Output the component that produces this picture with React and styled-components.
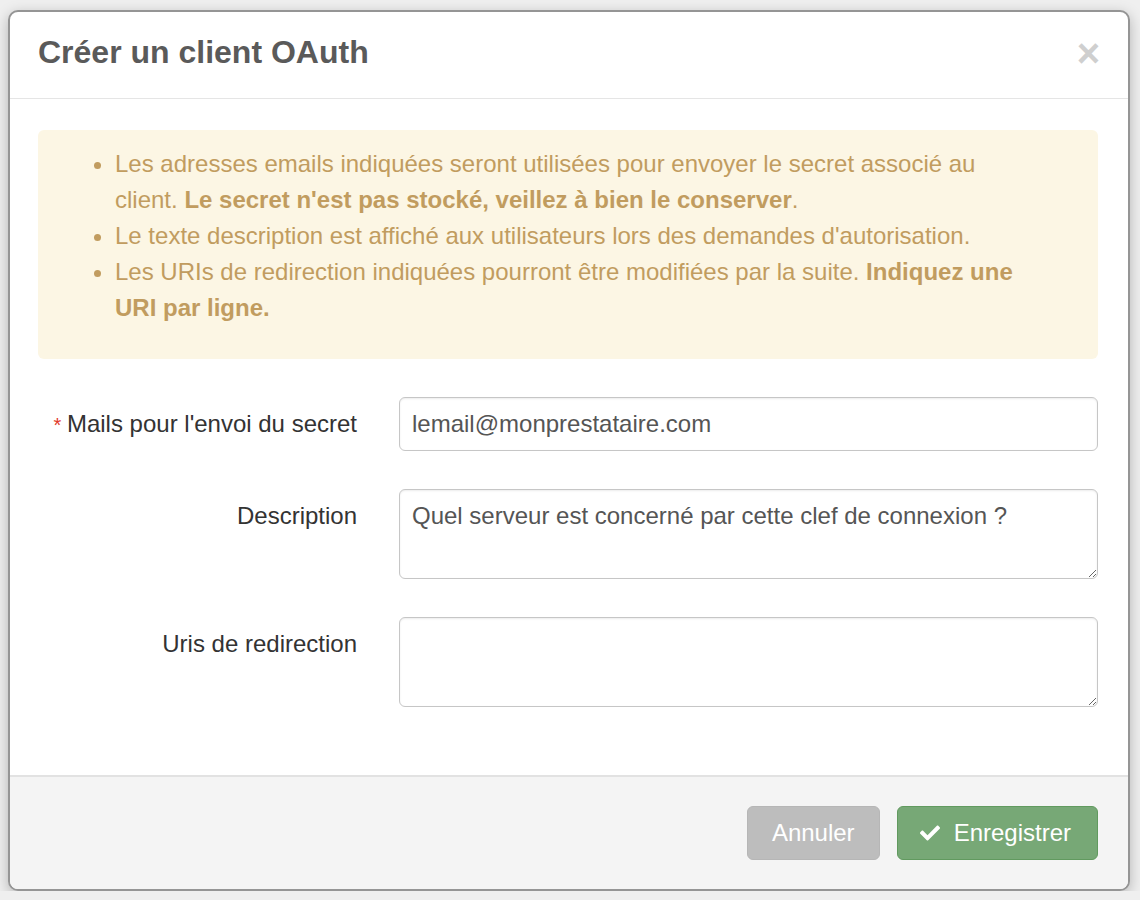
import React from 'react'
import styled, { createGlobalStyle } from 'styled-components'
import { FaCheck } from 'react-icons/fa'

const GlobalStyle = createGlobalStyle`
   html, body {
      margin: 0;
      padding: 0;
      background: #efefef;
      font-family: "Liberation Sans", Arial, Helvetica, sans-serif;
   }
   * {
      box-sizing: border-box;
   }
`

const Modal = styled.div`
   width: 1122px;
   margin: 10px 0 0 8px;
   background: #fff;
   border: 2px solid #959595;
   border-radius: 10px;
   box-shadow: 0 4px 14px rgba(0, 0, 0, 0.25);
   overflow: hidden;
`
const ModalHeader = styled.div`
   display: flex;
   justify-content: space-between;
   align-items: center;
   padding: 0 28px 6px 28px;
   height: 87px;
   border-bottom: 1px solid #e5e5e5;
`
const Title = styled.h4`
   margin: 0;
   font-size: 32px;
   font-weight: bold;
   color: #5a5a5a;
`
const Close = styled.button`
   border: none;
   background: none;
   padding: 0;
   font-family: "Liberation Sans", Arial, sans-serif;
   font-size: 40px;
   font-weight: bold;
   line-height: 1;
   color: #cfcfcf;
   cursor: pointer;
   margin-top: 2px;
`
const ModalBody = styled.div`
   padding: 31px 30px 30px 28px;
`
const Alert = styled.div`
   background: #fcf6e4;
   color: #c19c5f;
   border-radius: 6px;
   padding: 16px 67px 33px 24px;
   font-size: 24px;
   line-height: 36px;
   margin-bottom: 38px;
`
const AlertList = styled.ul`
   margin: 0;
   padding-left: 53px;
`
const FormRow = styled.div`
   display: grid;
   grid-template-columns: 319px 1fr;
   column-gap: 42px;
   margin-bottom: 38px;
`
const Label = styled.label`
   text-align: right;
   font-size: 24px;
   line-height: 32px;
   color: #333;
   padding-top: 11px;
   &::before {
      content: ${p => (p.$required ? '"* "' : 'none')};
      color: #e23a2a;
      font-size: 20px;
   }
`
const Input = styled.input`
   width: 100%;
   height: 54px;
   font-family: "Liberation Sans", Arial, sans-serif;
   font-size: 24px;
   color: #555;
   padding: 0 12px;
   border: 1px solid #c6c6c6;
   border-radius: 6px;
   box-shadow: inset 0 1px 2px rgba(0, 0, 0, 0.08);
   outline: none;
`
const TextArea = styled.textarea`
   display: block;
   width: 100%;
   height: 90px;
   font-family: "Liberation Sans", Arial, sans-serif;
   font-size: 24px;
   line-height: 32px;
   color: #555;
   padding: 10px 12px;
   border: 1px solid #c6c6c6;
   border-radius: 6px;
   box-shadow: inset 0 1px 2px rgba(0, 0, 0, 0.08);
   outline: none;
`
const ModalFooter = styled.div`
   display: flex;
   justify-content: flex-end;
   gap: 17px;
   background: #f4f4f4;
   border-top: 2px solid #e2e2e2;
   padding: 29px 30px 29px 0;
`
const Button = styled.button`
   display: flex;
   align-items: center;
   gap: 14px;
   height: 54px;
   padding: 0 ${p => (p.$primary ? '26px' : '24px')} 0 ${p => (p.$primary ? '22px' : '24px')};
   font-family: "Liberation Sans", Arial, sans-serif;
   font-size: 24px;
   color: #fff;
   background: ${p => (p.$primary ? '#77a876' : '#bdbdbd')};
   border: 1px solid ${p => (p.$primary ? '#619a5f' : '#b6b6b6')};
   border-radius: 6px;
   cursor: pointer;
`

const App = () => {
   return (
      <>
         <GlobalStyle />
         <Modal>
            <ModalHeader>
               <Title>Créer un client OAuth</Title>
               <Close>×</Close>
            </ModalHeader>
            <ModalBody>
               <Alert>
                  <AlertList>
                     <li>
                        Les adresses emails indiquées seront utilisées pour envoyer le secret associé au client.{' '}
                        <b>Le secret n'est pas stocké, veillez à bien le conserver</b>.
                     </li>
                     <li>Le texte description est affiché aux utilisateurs lors des demandes d'autorisation.</li>
                     <li>
                        Les URIs de redirection indiquées pourront être modifiées par la suite.{' '}
                        <b>Indiquez une URI par ligne.</b>
                     </li>
                  </AlertList>
               </Alert>
               <FormRow>
                  <Label $required>Mails pour l'envoi du secret</Label>
                  <Input type="text" defaultValue="lemail@monprestataire.com" />
               </FormRow>
               <FormRow>
                  <Label>Description</Label>
                  <TextArea defaultValue="Quel serveur est concerné par cette clef de connexion ?" />
               </FormRow>
               <FormRow>
                  <Label>Uris de redirection</Label>
                  <TextArea />
               </FormRow>
            </ModalBody>
            <ModalFooter>
               <Button>Annuler</Button>
               <Button $primary><FaCheck size={20} />Enregistrer</Button>
            </ModalFooter>
         </Modal>
      </>
   )
}

export default App
